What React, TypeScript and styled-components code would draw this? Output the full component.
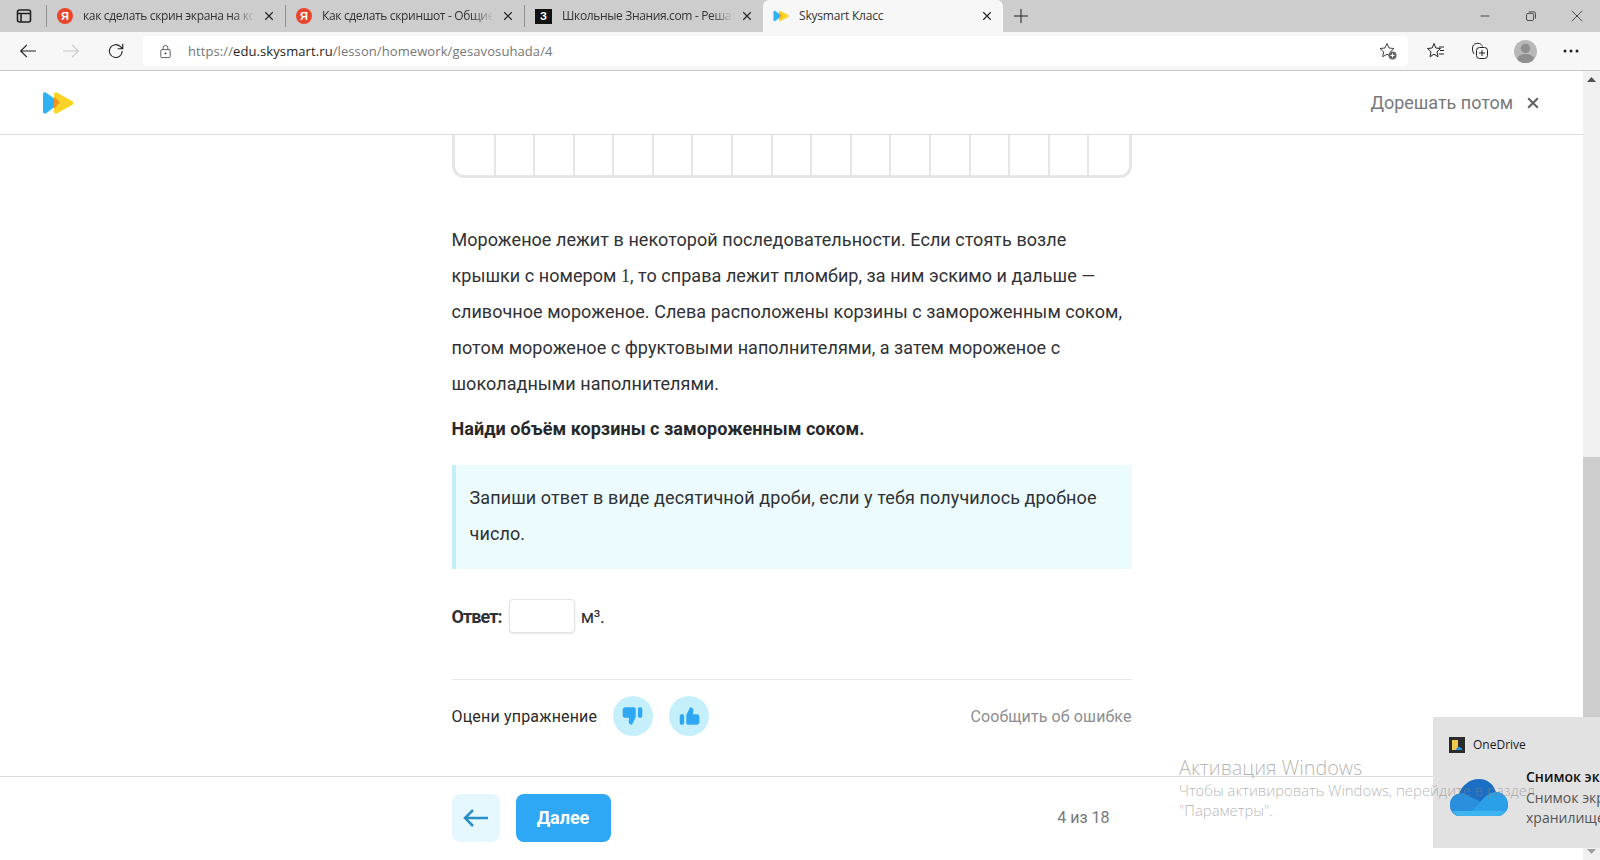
import React from 'react'
import styled, { createGlobalStyle } from 'styled-components'

const GlobalStyle = createGlobalStyle`
  html, body {
    margin: 0;
    padding: 0;
    height: 860px;
    overflow: hidden;
    background: #fff;
  }
  * {
    box-sizing: border-box;
  }
`

const Window = styled.div`
  position: relative;
  width: 1600px;
  height: 860px;
  display: flex;
  flex-direction: column;
  overflow: hidden;
  font-family: 'Roboto', 'Liberation Sans', sans-serif;
  color: #2b2b2b;
`

const TabStrip = styled.div`
  height: 32px;
  flex: none;
  display: flex;
  align-items: stretch;
  background: #cdcdcd;
  font-family: 'Open Sans', 'Noto Sans', sans-serif;
  font-size: 12px;
  letter-spacing: -0.2px;
`

const TabActions = styled.div`
  width: 47px;
  flex: none;
  display: flex;
  align-items: center;
  padding-left: 16px;
  border-right: 1px solid #8f8f8f;
  margin: 5px 0;
`

const Tab = styled.div<{ $active?: boolean; $width: number }>`
  width: ${p => p.$width}px;
  flex: none;
  display: flex;
  align-items: center;
  padding: 0 10px;
  gap: 10px;
  color: #333;
  background: ${p => (p.$active ? '#f7f7f7' : 'transparent')};
  border-radius: ${p => (p.$active ? '6px 6px 0 0' : '0')};
`

const TabDivider = styled.div`
  width: 1px;
  flex: none;
  margin: 5px 0;
  background: #8f8f8f;
`

const TabTitle = styled.span<{ $fade?: boolean }>`
  flex: 1;
  min-width: 0;
  padding-bottom: 2px;
  white-space: nowrap;
  ${p =>
    p.$fade
      ? `letter-spacing: -0.35px;
         -webkit-mask-image: linear-gradient(to right, #000 150px, transparent 172px);
         mask-image: linear-gradient(to right, #000 150px, transparent 172px);`
      : ''}
`

const YandexIcon = styled.div`
  width: 16px;
  height: 16px;
  flex: none;
  border-radius: 50%;
  background: #e8452c;
  color: #fff;
  font-size: 11px;
  font-weight: 700;
  line-height: 16px;
  text-align: center;
  letter-spacing: 0;
  font-family: 'Liberation Sans', sans-serif;
`

const ZnaniaIcon = styled.div`
  width: 17px;
  height: 15px;
  flex: none;
  background: #111;
  color: #fff;
  font-size: 11px;
  font-weight: 700;
  line-height: 15px;
  text-align: center;
  letter-spacing: 0;
  font-family: 'Liberation Sans', sans-serif;
`

const NewTab = styled.div`
  width: 36px;
  flex: none;
  display: flex;
  align-items: center;
  justify-content: center;
`

const Spacer = styled.div`
  flex: 1;
`

const WindowControl = styled.div`
  width: 46px;
  flex: none;
  display: flex;
  align-items: center;
  justify-content: center;
`

const Toolbar = styled.div`
  height: 39px;
  flex: none;
  display: flex;
  align-items: center;
  background: #f7f7f7;
  border-bottom: 1px solid #c6c6c6;
`

const NavButton = styled.div<{ $width: number }>`
  width: ${p => p.$width}px;
  flex: none;
  display: flex;
  align-items: center;
  justify-content: center;
`

const NavGroup = styled.div`
  display: flex;
  width: 143px;
  flex: none;
  padding-left: 10px;
`

const AddressBar = styled.div`
  width: 1265px;
  height: 30px;
  flex: none;
  display: flex;
  align-items: center;
  background: #fff;
  border-radius: 4px;
  padding: 0 10px 0 15px;
  font-family: 'Open Sans', 'Noto Sans', sans-serif;
  font-size: 13px;
  letter-spacing: 0.09px;
  color: #767676;
`

const Url = styled.span`
  flex: 1;
  margin-left: 15px;
  white-space: nowrap;
  b {
    font-weight: 400;
    color: #1e1e1e;
  }
`

const ToolbarIcons = styled.div`
  flex: 1;
  display: flex;
  align-items: center;
  padding-left: 6px;
`

const Avatar = styled.div`
  width: 23px;
  height: 23px;
  margin: 0 11px 0 12px;
  border-radius: 50%;
  background: #b8b8b8;
  overflow: hidden;
`

const Body = styled.div`
  flex: 1;
  min-height: 0;
  display: flex;
`

const Page = styled.div`
  flex: 1;
  min-width: 0;
  display: flex;
  flex-direction: column;
`

const Header = styled.header`
  height: 64px;
  flex: none;
  display: flex;
  align-items: center;
  justify-content: space-between;
  padding: 0 43px 0 42px;
  border-bottom: 1px solid #dcdcdc;
`

const Later = styled.div`
  display: flex;
  align-items: center;
  gap: 13px;
  font-size: 18px;
  letter-spacing: -0.03px;
  color: #77797c;
`

const Content = styled.main`
  flex: 1;
  min-height: 0;
  overflow: hidden;
`

const Column = styled.div`
  width: 680px;
  margin: 0 auto;
`

const Crossword = styled.div`
  height: 43px;
  display: grid;
  grid-template-columns: 41px repeat(15, 1fr) 39px;
  border: 3px solid #e6e6e6;
  border-top: 0;
  border-radius: 0 0 12px 12px;
`

const Cell = styled.div`
  border-right: 2px solid #e6e6e6;
  &:last-child {
    border-right: 0;
  }
`

const Text = styled.p<{ $top: number }>`
  margin: ${p => p.$top}px 0 0;
  font-size: 18px;
  line-height: 36px;
  letter-spacing: 0.05px;
  color: #2f3135;
`

const MathDigit = styled.span`
  font-family: 'Liberation Serif', serif;
`

const Task = styled(Text)`
  font-weight: 700;
  color: #26282b;
`

const Hint = styled.div`
  margin-top: 18px;
  padding: 15px 18px 17px 14px;
  background: #ecfbfe;
  border-left: 4px solid #c3eef9;
  font-size: 18px;
  line-height: 36px;
  letter-spacing: 0.1px;
  color: #2f3135;
`

const AnswerRow = styled.div`
  margin-top: 30px;
  display: flex;
  align-items: center;
  height: 34px;
  font-size: 18px;
  color: #2f3135;
`

const AnswerLabel = styled.span`
  font-weight: 700;
  letter-spacing: -0.9px;
`

const AnswerInput = styled.div`
  width: 66px;
  height: 34px;
  margin: 0 6px 0 7px;
  background: #fff;
  border: 1px solid #e3e3e3;
  border-radius: 4px;
  box-shadow: 0 1px 2px rgba(0, 0, 0, 0.1);
`

const Unit = styled.span`
  letter-spacing: -0.4px;
`

const RateRow = styled.div`
  margin-top: 46px;
  border-top: 1px solid #e6e6e6;
  padding-top: 16px;
  display: flex;
  align-items: center;
  font-size: 16px;
  letter-spacing: 0.18px;
`

const RateButton = styled.div`
  width: 40px;
  height: 40px;
  flex: none;
  margin-left: 16px;
  border-radius: 50%;
  background: #c5f0fb;
  display: flex;
  align-items: center;
  justify-content: center;
`

const Report = styled.span`
  margin-left: auto;
  letter-spacing: 0.1px;
  color: #8c8e91;
`

const Footer = styled.footer`
  height: 84px;
  flex: none;
  border-top: 1px solid #dcdcdc;
`

const FooterRow = styled.div`
  width: 680px;
  margin: 0 auto;
  padding: 17px 22px 0 0;
  display: flex;
  align-items: flex-start;
`

const BackButton = styled.div`
  width: 48px;
  height: 48px;
  border-radius: 8px;
  background: #e6f8fd;
  display: flex;
  align-items: center;
  justify-content: center;
`

const NextButton = styled.div`
  width: 95px;
  height: 48px;
  margin-left: 16px;
  padding-bottom: 2px;
  border-radius: 8px;
  background: #2ea8f4;
  color: #fff;
  font-size: 18px;
  font-weight: 700;
  display: flex;
  align-items: center;
  justify-content: center;
`

const Progress = styled.span`
  margin-left: auto;
  line-height: 48px;
  font-size: 16px;
  color: #77797c;
`

const Scrollbar = styled.div`
  width: 17px;
  flex: none;
  display: flex;
  flex-direction: column;
  align-items: center;
  background: #f0f0f0;
`

const ScrollArrow = styled.div`
  height: 17px;
  flex: none;
  display: flex;
  align-items: center;
  justify-content: center;
`

const ScrollTrack = styled.div`
  flex: 1;
  width: 100%;
  padding-top: 369px;
`

const ScrollThumb = styled.div`
  height: 260px;
  background: #cdcdcd;
`

const Toast = styled.div`
  position: absolute;
  left: 1433px;
  top: 717px;
  width: 167px;
  height: 131px;
  padding: 19px 0 0 16px;
  background: #e2e2e2;
  overflow: hidden;
  font-family: 'Open Sans', 'Noto Sans', sans-serif;
  color: #1b1b1b;
`

const ToastHead = styled.div`
  display: flex;
  align-items: center;
  gap: 8px;
  font-size: 12px;
`

const ToastBody = styled.div`
  margin-top: 14px;
  display: flex;
  gap: 18px;
`

const CloudSlot = styled.div`
  flex: none;
  padding: 12px 0 0 1px;
`

const ToastLines = styled.div`
  flex: none;
  font-size: 14px;
  line-height: 20.5px;
  white-space: nowrap;
  color: #555;
  strong {
    display: block;
    color: #111;
    font-weight: 600;
  }
`

const Watermark = styled.div`
  position: absolute;
  left: 1179px;
  top: 755px;
  font-family: 'Open Sans', 'Noto Sans', sans-serif;
  font-weight: 300;
  font-size: 14.9px;
  line-height: 20px;
  color: rgba(130, 130, 130, 0.6);
  pointer-events: none;
  h4 {
    margin: 0 0 -1px;
    font-size: 19.8px;
    font-weight: 300;
    line-height: 26px;
  }
`

const Stroke: React.FC<{ size?: number; color?: string; width?: number; children: React.ReactNode }> = ({
  size = 16,
  color = '#333',
  width = 1,
  children,
}) => (
  <svg width={size} height={size} viewBox="0 0 16 16" fill="none" stroke={color} strokeWidth={width}>
    {children}
  </svg>
)

const Close = () => (
  <Stroke size={12} width={1.5} color="#222">
    <path d="M3 3l10 10M13 3L3 13" />
  </Stroke>
)

const Logo: React.FC<{ size?: number }> = ({ size = 32 }) => (
  <svg width={size} height={(size * 24) / 32} viewBox="0 0 32 24">
    <path d="M1 3.500C1 1.500 2.600.8 4.200 1.800L15 9.500c1.500 1.100 1.500 3.400 0 4.500L4.200 22.200C2.600 23.200 1 22.500 1 20.500z" fill="#2fb2f5" />
    <path d="M12 3.500c0-1.900 1.700-2.700 3.200-1.700l15 8.200c1.500 1 1.500 3 0 4L15.200 22.200C13.700 23.200 12 22.400 12 20.500z" fill="#fbd327" />
    <path d="M12 6l4 3c1.500 1.100 1.500 3.400 0 4.500L12 18z" fill="#f7941d" />
  </svg>
)

const OneDriveCloud = () => (
  <svg width="58" height="38" viewBox="0 0 58 38">
    <path d="M10 37C4 37 0 32 0 26c0-6 4-11 9-11C12 6 20 0 29 0c9 0 15 6 17 13 7 0 12 6 12 13 0 6-5 11-11 11z" fill="#1a6fc4" />
    <path d="M10 37C4 37 0 32 0 26c0-6 4-11 9-11l4-1 16 8 12 15z" fill="#2a8fdd" />
    <path d="M47 37H17l14-15c4-5 9-9 15-9 7 0 12 6 12 13 0 6-5 11-11 11z" fill="#2b9fe8" />
    <path d="M10 37c-3 0-6-2-8-5h54c-2 3-5 5-9 5z" fill="#3eb4ef" />
  </svg>
)

const App: React.FC = () => {
  return (
    <Window>
      <GlobalStyle />
      <TabStrip>
        <TabActions>
          <Stroke size={16} width={1.6} color="#222">
            <rect x="1.500" y="2" width="13" height="12" rx="2" />
            <path d="M1.500 5.500h13M5 5.500V14" />
          </Stroke>
        </TabActions>
        <Tab $width={238}>
          <YandexIcon>Я</YandexIcon>
          <TabTitle $fade>как сделать скрин экрана на ко</TabTitle>
          <Close />
        </Tab>
        <TabDivider />
        <Tab $width={238}>
          <YandexIcon>Я</YandexIcon>
          <TabTitle $fade>Как сделать скриншот - Общие</TabTitle>
          <Close />
        </Tab>
        <TabDivider />
        <Tab $width={238}>
          <ZnaniaIcon>З</ZnaniaIcon>
          <TabTitle $fade>Школьные Знания.com - Решае</TabTitle>
          <Close />
        </Tab>
        <Tab $active $width={240}>
          <Logo size={16} />
          <TabTitle>Skysmart Класс</TabTitle>
          <Close />
        </Tab>
        <NewTab>
          <Stroke size={16} color="#222">
            <path d="M8 1v14M1 8h14" />
          </Stroke>
        </NewTab>
        <Spacer />
        <WindowControl>
          <Stroke size={12} color="#222">
            <path d="M2 8h12" />
          </Stroke>
        </WindowControl>
        <WindowControl>
          <Stroke size={12} color="#222">
            <rect x="2" y="4.500" width="9.500" height="9.500" rx="2" />
            <path d="M5 2.500h7a2 2 0 0 1 2 2v7" />
          </Stroke>
        </WindowControl>
        <WindowControl>
          <Stroke size={12} color="#222">
            <path d="M1 1l14 14M15 1L1 15" />
          </Stroke>
        </WindowControl>
      </TabStrip>

      <Toolbar>
        <NavGroup>
          <NavButton $width={36}>
            <Stroke size={18} color="#222">
              <path d="M15 8H1.500M7 2.500L1.500 8 7 13.500" />
            </Stroke>
          </NavButton>
          <NavButton $width={50}>
            <Stroke size={18} color="#c6c6c6">
              <path d="M1 8h13.500M9 2.500L14.500 8 9 13.500" />
            </Stroke>
          </NavButton>
          <NavButton $width={40}>
            <Stroke size={18} color="#222">
              <path d="M13.500 8a5.700 5.700 0 1 1-1.800-4.100L14 6M14 1.500V6H9.500" />
            </Stroke>
          </NavButton>
        </NavGroup>
        <AddressBar>
          <Stroke size={15} color="#555">
            <rect x="3" y="6" width="10" height="8.500" rx="1" />
            <path d="M5.500 6V4a2.500 2.500 0 0 1 5 0v2" />
            <circle cx="8" cy="10" r="0.700" fill="#555" />
          </Stroke>
          <Url>
            https://<b>edu.skysmart.ru</b>/lesson/homework/gesavosuhada/4
          </Url>
          <svg width="20" height="20" viewBox="0 0 20 20" fill="none" stroke="#444">
            <path d="M9 2.500l2 4.500 5 .500-3.700 3.300 1 4.900L9 13.200l-4.300 2.500 1-4.900L2 7.500 7 7z" />
            <circle cx="14.500" cy="14.500" r="4" fill="#666" stroke="none" />
            <path d="M14.500 12.500v4M12.500 14.500h4" stroke="#fff" />
          </svg>
        </AddressBar>
        <ToolbarIcons>
          <NavButton $width={44}>
            <svg width="20" height="20" viewBox="0 0 20 20" fill="none" stroke="#222">
              <path d="M8 2.500l1.800 4.500 4.700.500-3.500 3.300 1 4.900L8 13.200l-4 2.500 1-4.900L1.500 7.500 6.200 7zM13 6h5M14 9.500h4M13 13h5" />
            </svg>
          </NavButton>
          <NavButton $width={44}>
            <svg width="20" height="20" viewBox="0 0 20 20" fill="none" stroke="#222">
              <rect x="6.500" y="6.500" width="11" height="11" rx="3" />
              <path d="M12 9v6M9 12h6M4 13C2 10 2 6 3.500 4c1-1.500 4-2 6-1.500 1 .300 2.500 1.500 3 3" />
            </svg>
          </NavButton>
          <Avatar>
            <svg width="23" height="23" viewBox="0 0 22 22">
              <circle cx="11" cy="8" r="4.500" fill="#8f8f8f" />
              <ellipse cx="11" cy="18" rx="8" ry="4.500" fill="#8f8f8f" />
            </svg>
          </Avatar>
          <NavButton $width={46}>
            <svg width="16" height="4" viewBox="0 0 16 4" fill="#222">
              <circle cx="2" cy="2" r="1.500" />
              <circle cx="8" cy="2" r="1.500" />
              <circle cx="14" cy="2" r="1.500" />
            </svg>
          </NavButton>
        </ToolbarIcons>
      </Toolbar>

      <Body>
        <Page>
          <Header>
            <Logo />
            <Later>
              Дорешать потом
              <Stroke size={14} width={2.4} color="#5f6164">
                <path d="M2.500 2.500l11 11M13.500 2.500l-11 11" />
              </Stroke>
            </Later>
          </Header>
          <Content>
            <Column>
              <Crossword>
                {Array.from({ length: 17 }).map((_, i) => (
                  <Cell key={i} />
                ))}
              </Crossword>
              <Text $top={44}>
                Мороженое лежит в некоторой последовательности. Если стоять возле крышки с номером{' '}
                <MathDigit>1</MathDigit>, то справа лежит пломбир, за ним эскимо и дальше — сливочное мороженое. Слева
                расположены корзины с замороженным соком, потом мороженое с фруктовыми наполнителями, а затем мороженое
                с шоколадными наполнителями.
              </Text>
              <Task $top={9}>Найди объём корзины с замороженным соком.</Task>
              <Hint>Запиши ответ в виде десятичной дроби, если у тебя получилось дробное число.</Hint>
              <AnswerRow>
                <AnswerLabel>Ответ:</AnswerLabel>
                <AnswerInput />
                <Unit>м³.</Unit>
              </AnswerRow>
              <RateRow>
                Оцени упражнение
                <RateButton>
                  <svg width="24" height="24" viewBox="0 0 22 22" fill="#2ea8f4">
                    <path d="M1.500 5.500C1.500 4 2.700 3 4 3h8c.8 0 1.500.7 1.500 1.500V12l-3.500 7c-1.800 0-3-1.200-3-3l.5-3.500H3.500c-1.200 0-2-1-2-2.200z" />
                    <rect x="15.500" y="3" width="4" height="9.500" rx="1.500" />
                  </svg>
                </RateButton>
                <RateButton>
                  <svg width="24" height="24" viewBox="0 0 22 22" fill="#2ea8f4">
                    <path d="M20.500 16.500c0 1.500-1.200 2.500-2.500 2.500h-8c-.8 0-1.500-.7-1.500-1.500V10L12 3c1.800 0 3 1.200 3 3l-.5 3.500h4c1.200 0 2 1 2 2.200z" />
                    <rect x="2.500" y="9.500" width="4" height="9.500" rx="1.500" />
                  </svg>
                </RateButton>
                <Report>Сообщить об ошибке</Report>
              </RateRow>
            </Column>
          </Content>
          <Footer>
            <FooterRow>
              <BackButton>
                <svg width="26" height="20" viewBox="0 0 26 20" fill="none" stroke="#2b8fc7" strokeWidth="2.500">
                  <path d="M25 10H2M10 2l-8 8 8 8" />
                </svg>
              </BackButton>
              <NextButton>Далее</NextButton>
              <Progress>4 из 18</Progress>
            </FooterRow>
          </Footer>
        </Page>
        <Scrollbar>
          <ScrollArrow>
            <svg width="9" height="5" viewBox="0 0 9 5" fill="#505050">
              <path d="M4.500 0L9 5H0z" />
            </svg>
          </ScrollArrow>
          <ScrollTrack>
            <ScrollThumb />
          </ScrollTrack>
          <ScrollArrow>
            <svg width="9" height="5" viewBox="0 0 9 5" fill="#a0a0a0">
              <path d="M0 0h9L4.500 5z" />
            </svg>
          </ScrollArrow>
        </Scrollbar>
      </Body>

      <Toast>
        <ToastHead>
          <svg width="16" height="16" viewBox="0 0 16 16">
            <rect width="16" height="16" fill="#2b2b2b" />
            <rect x="3" y="3" width="6" height="10" fill="#f2c94c" />
            <path d="M7 13c0-2 1.500-3 3-3 1 0 3 .8 3 3z" fill="#2a93e0" />
          </svg>
          OneDrive
        </ToastHead>
        <ToastBody>
          <CloudSlot>
            <OneDriveCloud />
          </CloudSlot>
          <ToastLines>
            <strong>Снимок эк</strong>
            Снимок экр
            <br />
            хранилище
          </ToastLines>
        </ToastBody>
      </Toast>
      <Watermark>
        <h4>Активация Windows</h4>
        Чтобы активировать Windows, перейдите в раздел
        <br />
        "Параметры".
      </Watermark>
    </Window>
  )
}

export default App
